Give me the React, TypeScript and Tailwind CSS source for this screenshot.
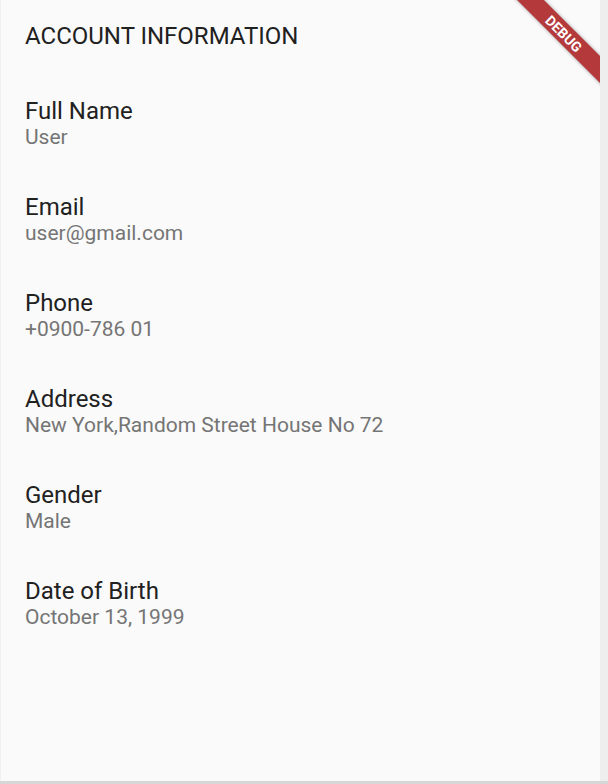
const fields = [
  { label: "Full Name", value: "User" },
  { label: "Email", value: "user@gmail.com" },
  { label: "Phone", value: "+0900-786 01" },
  { label: "Address", value: "New York,Random Street House No 72" },
  { label: "Gender", value: "Male" },
  { label: "Date of Birth", value: "October 13, 1999" },
];

export default function App() {
  return (
    <main className="w-[608px] h-[784px] bg-[#eeeeee] font-['Roboto',sans-serif]">
      <div className="relative w-[600px] h-[781px] overflow-hidden bg-[#fafafa] border-l border-[#f0f0f0]">
        {/* Debug banner */}
        <div className="absolute left-[488px] top-[24px] w-[150px] h-[19px] rotate-45 bg-[#b3393b] shadow-[0_0_4px_rgba(0,0,0,0.35)] flex items-center justify-center">
          <span className="text-white font-bold text-[14px] leading-none">DEBUG</span>
        </div>

        <div className="px-[24px] pt-[22px]">
          <h1 className="text-[24px] leading-[28px] text-[#212121]">ACCOUNT INFORMATION</h1>

          <div className="flex flex-col gap-[44px] mt-[48px]">
            {fields.map((f) => (
              <div key={f.label} className="flex flex-col">
                <span className="text-[24px] leading-[26px] text-[#212121]">{f.label}</span>
                <span className="text-[21px] leading-[26px] text-[#757575]">{f.value}</span>
              </div>
            ))}
          </div>
        </div>
      </div>
      <div className="h-[3px] bg-[#d6d6d6]" />
    </main>
  );
}
